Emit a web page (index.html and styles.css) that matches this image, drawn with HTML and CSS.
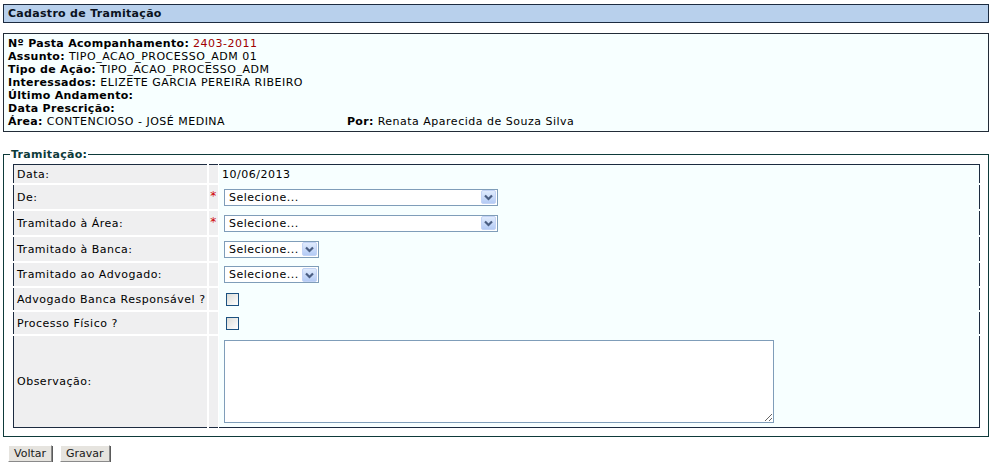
FILE: index.html
```html
<!DOCTYPE html>
<html lang="pt-BR">
<head>
<meta charset="utf-8">
<title>Cadastro de Tramitação</title>
<link rel="stylesheet" href="styles.css">
</head>
<body>
<div class="page">
  <div class="titlebar">Cadastro de Tramitação</div>

  <div class="infobox">
    <div><b>Nº Pasta Acompanhamento:</b> <span class="red">2403-2011</span></div>
    <div><b>Assunto:</b> TIPO_ACAO_PROCESSO_ADM 01</div>
    <div><b>Tipo de Ação:</b> TIPO_ACAO_PROCESSO_ADM</div>
    <div><b>Interessados:</b> ELIZETE GARCIA PEREIRA RIBEIRO</div>
    <div><b>Último Andamento:</b></div>
    <div><b>Data Prescrição:</b></div>
    <div class="lastline"><span class="area"><b>Área:</b> CONTENCIOSO - JOSÉ MEDINA</span><span><b>Por:</b> Renata Aparecida de Souza Silva</span></div>
  </div>

  <fieldset class="tram">
    <legend>Tramitação:</legend>
    <table class="form">
      <tr class="r-data">
        <td class="lbl">Data:</td><td class="req"></td><td class="val vdata">10/06/2013</td>
      </tr>
      <tr class="r-sel">
        <td class="lbl">De:</td><td class="req"><span class="star">*</span></td>
        <td class="val"><span class="sel wide"><span class="seltext">Selecione...</span><span class="arrow"><svg width="13" height="12" viewBox="0 0 13 12"><path d="M3 4.5 L6.5 8 L10 4.5" fill="none" stroke="#4a5e82" stroke-width="2.2"/></svg></span></span></td>
      </tr>
      <tr class="r-sel">
        <td class="lbl">Tramitado à Área:</td><td class="req"><span class="star">*</span></td>
        <td class="val"><span class="sel wide"><span class="seltext">Selecione...</span><span class="arrow"><svg width="13" height="12" viewBox="0 0 13 12"><path d="M3 4.5 L6.5 8 L10 4.5" fill="none" stroke="#4a5e82" stroke-width="2.2"/></svg></span></span></td>
      </tr>
      <tr class="r-sel">
        <td class="lbl">Tramitado à Banca:</td><td class="req"></td>
        <td class="val"><span class="sel small"><span class="seltext">Selecione...</span><span class="arrow"><svg width="13" height="12" viewBox="0 0 13 12"><path d="M3 4.5 L6.5 8 L10 4.5" fill="none" stroke="#4a5e82" stroke-width="2.2"/></svg></span></span></td>
      </tr>
      <tr class="r-sel2">
        <td class="lbl">Tramitado ao Advogado:</td><td class="req"></td>
        <td class="val"><span class="sel small"><span class="seltext">Selecione...</span><span class="arrow"><svg width="13" height="12" viewBox="0 0 13 12"><path d="M3 4.5 L6.5 8 L10 4.5" fill="none" stroke="#4a5e82" stroke-width="2.2"/></svg></span></span></td>
      </tr>
      <tr class="r-chk">
        <td class="lbl">Advogado Banca Responsável ?</td><td class="req"></td>
        <td class="val"><span class="chk"></span></td>
      </tr>
      <tr class="r-chk">
        <td class="lbl">Processo Físico ?</td><td class="req"></td>
        <td class="val"><span class="chk"></span></td>
      </tr>
      <tr class="r-obs">
        <td class="lbl last">Observação:</td><td class="req last"></td>
        <td class="val last"><textarea class="obs"></textarea></td>
      </tr>
    </table>
  </fieldset>

  <div class="buttons">
    <button class="btn" type="button">Voltar</button>
    <button class="btn" type="button">Gravar</button>
  </div>
</div>
</body>
</html>
```

FILE: styles.css
```css
html, body {
  margin: 0;
  padding: 0;
  background: #ffffff;
}
body {
  font-family: "DejaVu Sans", Verdana, sans-serif;
  font-size: 11px;
  letter-spacing: 0.5px;
  color: #000;
}
b, .titlebar, .tram legend {
  letter-spacing: 0.3px;
}
.page {
  padding: 4px 5px 0 3px;
}
.titlebar {
  height: 17px;
  line-height: 17px;
  border: 1px solid #1c2b40;
  background: #b8d0ec;
  font-weight: bold;
  padding-left: 4px;
  color: #0a1220;
}
.infobox {
  margin-top: 10px;
  border: 1px solid #222c38;
  background: #f7ffff;
  padding: 3px 4px 0 4px;
  box-sizing: border-box;
  height: 99px;
  line-height: 13px;
}
.red { color: #a00000; }
.lastline { display: flex; }
.area { width: 339px; }

.tram {
  margin: 16px 0 0 0;
  padding: 3px 8px 8px 9px;
  border: 1px solid #0e3a3a;
  min-width: 0;
}
.tram legend {
  font-weight: bold;
  color: #0e3a3a;
  padding: 0 1px;
  margin-left: -3px;
  font-size: 11px;
  line-height: 13px;
}
.form {
  width: 100%;
  border-collapse: collapse;
  border: 1px solid #1c2b40;
  background: #f7ffff;
}
.form td {
  padding: 0;
  border-bottom: 2px solid #ffffff;
  vertical-align: middle;
}
.form td.last { border-bottom: 0; }
.lbl {
  width: 190px;
  background: #efeff0;
  padding-left: 3px !important;
  border-right: 2px solid #ffffff;
  white-space: nowrap;
}
.req {
  width: 9px;
  background: #efeff0;
  text-align: center;
  border-right: 1px solid #ffffff;
}
.val {
  padding-left: 5px !important;
  border-bottom-color: #f7ffff !important;
}
.val.vdata { padding-left: 3px !important; }
.r-data td { height: 18px; }
.r-sel td { height: 24px; }
.r-sel2 td { height: 23px; }
.r-chk td { height: 22px; }
.r-obs td { height: 91px; }
.star {
  color: #d00000;
  font-size: 12px;
  position: relative;
  top: -1px;
}
.sel {
  display: inline-flex;
  align-items: center;
  justify-content: space-between;
  box-sizing: border-box;
  height: 17px;
  border: 1px solid #7f9db9;
  background: #fff;
  padding: 0 1px 0 4px;
  vertical-align: middle;
}
.sel.wide { width: 274px; }
.sel.small { width: 95px; }
.seltext { white-space: nowrap; }
.arrow {
  display: inline-flex;
  align-items: center;
  justify-content: center;
  width: 15px;
  height: 14px;
  box-sizing: border-box;
  border: 1px solid #c3d3f5;
  border-radius: 2px;
  background: linear-gradient(#e0ebfd, #b4cbf5);
}
.arrow svg {
  display: block;
}
.chk {
  display: inline-block;
  width: 13px;
  height: 13px;
  box-sizing: border-box;
  border: 1px solid #1c5180;
  background: linear-gradient(135deg, #dcdcd7, #ffffff);
  margin-left: 2px;
  vertical-align: middle;
}
.obs {
  display: block;
  width: 550px;
  height: 83px;
  box-sizing: border-box;
  border: 1px solid #7f9db9;
  background: #fff;
  margin: 0;
  padding: 2px;
  font-family: inherit;
  font-size: 11px;
}
.buttons {
  display: flex;
  gap: 8px;
  margin-top: 8px;
  padding-left: 5px;
}
.btn {
  font-family: "DejaVu Sans", Tahoma, sans-serif;
  font-size: 11px;
  letter-spacing: 0;
  height: 17px;
  padding: 0 5px;
  background: #e6e4df;
  border: 1px solid;
  border-color: #ffffff #8a8a8a #8a8a8a #ffffff;
  box-shadow: 1px 1px 0 #5a5a5a;
  color: #1a1a1a;
  line-height: 13px;
}
```
